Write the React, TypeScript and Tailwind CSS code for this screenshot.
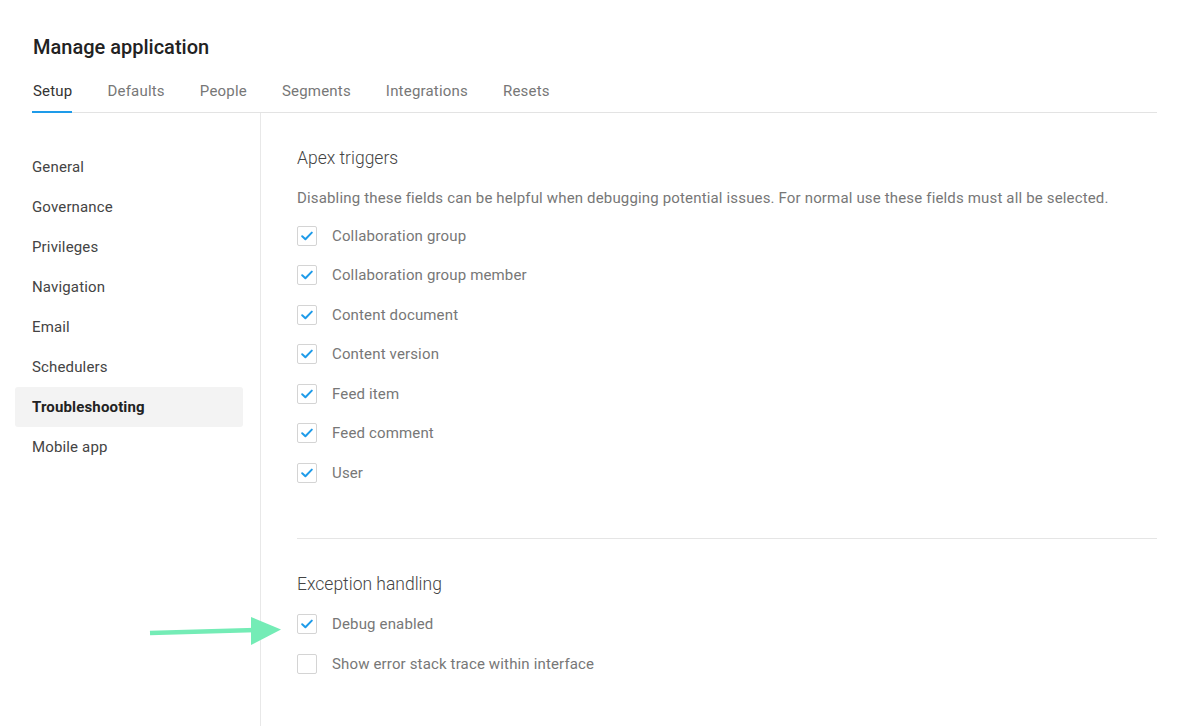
import React from "react";

const tabs = ["Setup", "Defaults", "People", "Segments", "Integrations", "Resets"];
const nav = ["General", "Governance", "Privileges", "Navigation", "Email", "Schedulers", "Troubleshooting", "Mobile app"];
const apex = [
  "Collaboration group",
  "Collaboration group member",
  "Content document",
  "Content version",
  "Feed item",
  "Feed comment",
  "User",
];

function Check({ checked, label }: { checked: boolean; label: string }) {
  return (
    <div className="flex h-[39.5px] items-center gap-[15px]">
      <div className="flex h-[20px] w-[20px] items-center justify-center rounded-[2px] border border-[#d4d4d4] bg-white">
        {checked && (
          <svg width="12" height="10" viewBox="0 0 12 10" fill="none">
            <path d="M1.2 5.2 L4.4 8.2 L10.8 1.6" stroke="#1e9be9" strokeWidth="2" strokeLinecap="round" strokeLinejoin="round" />
          </svg>
        )}
      </div>
      <span className="text-[15px] tracking-[0.15px] text-[#777]">{label}</span>
    </div>
  );
}

export default function App() {
  return (
    <div className="relative min-h-[728px] bg-white font-['Roboto',sans-serif]">
      <div className="px-[32px] pt-[35px]">
        <h1 className="pl-px text-[20px] font-medium leading-[24px] text-[#222]">Manage application</h1>
        <div className="mt-[18px] mr-[2px] flex gap-[35px] border-b border-[#e3e3e3]">
          {tabs.map((t, i) => (
            <div
              key={t}
              className={
                i === 0
                  ? "-mb-px border-b-2 border-[#1e9be9] pt-[4px] pb-[10px] pl-px text-[15px] leading-[20px] tracking-[0.2px] text-[#333]"
                  : "-mb-px border-b-2 border-transparent pt-[4px] pb-[10px] text-[15px] leading-[20px] tracking-[0.2px] text-[#777]"
              }
            >
              {t}
            </div>
          ))}
        </div>
      </div>
      <div className="flex">
        <div className="min-h-[613px] w-[261px] shrink-0 border-r border-[#e8e8e8] pt-[34px] pl-[15px]">
          {nav.map((n) => (
            <div
              key={n}
              className={
                n === "Troubleshooting"
                  ? "flex h-[40px] w-[228px] items-center rounded-[3px] bg-[#f3f3f3] pl-[17px] text-[15px] font-bold tracking-[0.15px] text-[#222]"
                  : "flex h-[40px] w-[228px] items-center pl-[17px] text-[15px] tracking-[0.15px] text-[#444]"
              }
            >
              {n}
            </div>
          ))}
        </div>
        <div className="flex-1 pt-[33px] pl-[36px] pr-[34px]">
          <h2 className="text-[17.5px] font-light leading-[24px] text-[#444]">Apex triggers</h2>
          <p className="mt-[18px] text-[15px] leading-[20px] tracking-[0.16px] text-[#777]">
            Disabling these fields can be helpful when debugging potential issues. For normal use these fields must all be selected.
          </p>
          <div className="mt-[8px]">
            {apex.map((a) => (
              <Check key={a} checked label={a} />
            ))}
          </div>
          <div className="mt-[45px] border-t border-[#e5e5e5]" />
          <h2 className="mt-[33px] text-[17.5px] font-light leading-[24px] text-[#444]">Exception handling</h2>
          <div className="mt-[9px]">
            <Check checked label="Debug enabled" />
            <Check checked={false} label="Show error stack trace within interface" />
          </div>
        </div>
      </div>
      <svg className="absolute left-0 top-0" width="300" height="728" viewBox="0 0 300 728" style={{ pointerEvents: "none" }}>
        <path d="M150 633 L256 630" stroke="#74ecb6" strokeWidth="4.5" />
        <polygon points="251,617 281,629.5 251,645" fill="#74ecb6" />
      </svg>
    </div>
  );
}
